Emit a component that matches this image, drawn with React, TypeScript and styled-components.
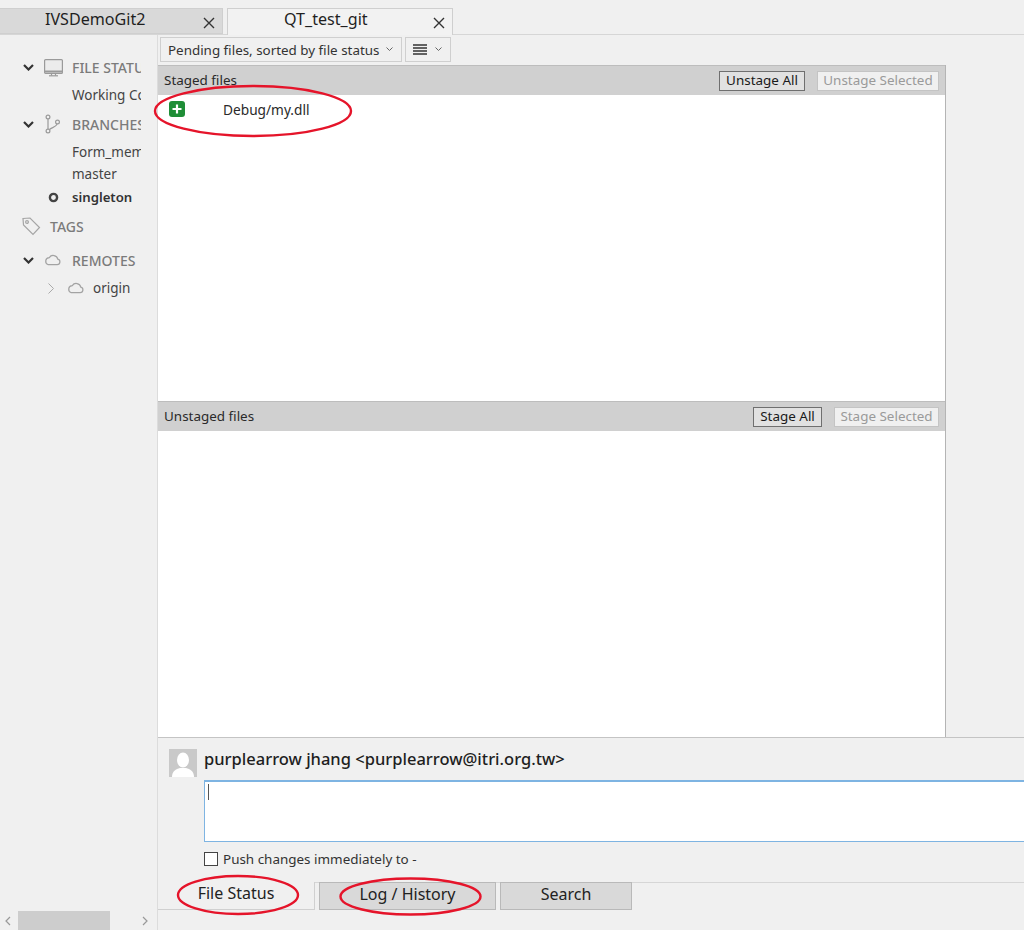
import React from "react";
import styled, { createGlobalStyle } from "styled-components";

const Global = createGlobalStyle`
  html, body { margin: 0; padding: 0; background: #f0f0f0; }
  * { box-sizing: border-box; }
  body { font-family: "Noto Sans", "Open Sans", "Liberation Sans", sans-serif; color: #222; }
`;

const Page = styled.div`
  position: relative; width: 1024px; height: 930px; overflow: hidden;
  background: #f0f0f0; display: flex; flex-direction: column;
`;
const TabBar = styled.div`
  height: 35px; flex: none; padding: 8px 0 0 0; display: flex; gap: 4px;
  border-bottom: 1px solid #d6d6d6;
`;
const RepoTab = styled.div<{ $active?: boolean; $w: number }>`
  position: relative; width: ${p => p.$w}px; height: ${p => (p.$active ? 27 : 26)}px;
  background: ${p => (p.$active ? "#f2f2f2" : "#d9d9d9")};
  border: 1px solid #cfcfcf; ${p => (p.$active ? "border-bottom: none;" : "border-left: none;")}
  font-size: 16.1px; line-height: 19px; color: #1f1f1f;
`;
const TabTitle = styled.span<{ $left: number }>`
  position: absolute; left: ${p => p.$left}px; top: 1px; white-space: nowrap;
`;
const CloseBtn = styled.svg`
  position: absolute; right: 7px; top: 8px; width: 12px; height: 12px;
`;
const Body = styled.div`
  flex: 1; display: flex; min-height: 0;
`;
const Sidebar = styled.aside`
  width: 158px; flex: none; display: flex; flex-direction: column;
  border-right: 1px solid #dcdcdc; position: relative;
`;
const Tree = styled.div`
  flex: 1; width: 141px; overflow: hidden; padding-top: 18px;
`;
const Row = styled.div<{ $h: number; $pl: number; $head?: boolean }>`
  height: ${p => p.$h}px; padding-left: ${p => p.$pl}px; display: flex; align-items: center;
  white-space: nowrap; color: ${p => (p.$head ? "#7b7b7b" : "#444")};
  font-weight: ${p => (p.$head ? 500 : 400)}; font-size: ${p => (p.$head ? 14 : 13.5)}px;
`;
const Bold = styled.span`
  font-weight: 600; color: #333; font-size: 13.2px;
`;
const IconSlot = styled.span<{ $w: number }>`
  width: ${p => p.$w}px; flex: none; display: flex; align-items: center;
`;
const ScrollTrack = styled.div`
  height: 26px; display: flex; align-items: center; position: relative; flex: none;
`;
const ScrollThumb = styled.div`
  position: absolute; left: 18px; top: 7px; width: 92px; height: 19px; background: #cdcdcd;
`;
const ScrollArrow = styled.svg<{ $left: number }>`
  position: absolute; left: ${p => p.$left}px; top: 12px; width: 8px; height: 10px;
`;
const Main = styled.main`
  flex: 1; min-width: 0; display: flex; flex-direction: column;
`;
const Toolbar = styled.div`
  height: 30px; flex: none; display: flex; gap: 3px; padding: 2px 0 0 2px;
`;
const Dropdown = styled.div<{ $w: number }>`
  width: ${p => p.$w}px; height: 25px; background: #f0f0f0; border: 1px solid #cfcfcf;
  display: flex; align-items: center; padding: 0 8px 0 7px; justify-content: space-between;
  font-size: 13.4px; color: #333; white-space: nowrap;
`;
const FilesArea = styled.div`
  flex: 1; min-height: 0; display: flex; border-bottom: 1px solid #c4c4c4;
`;
const FilesCol = styled.div`
  width: 788px; flex: none; display: flex; flex-direction: column;
  border-right: 1px solid #b4b4b4;
`;
const Pane = styled.section`
  flex: 1 0 0; min-height: 0; display: flex; flex-direction: column;
`;
const PaneHeader = styled.div`
  height: 30px; flex: none; background: #d0d0d0; display: flex; align-items: center;
  padding: 0 6px; gap: 12px; font-size: 13.45px; color: #2a2a2a;
  border-top: 1px solid #bdbdbd;
`;
const PaneTitle = styled.span`
  flex: 1; position: relative; top: -1px;
`;
const HdrBtn = styled.div<{ $disabled?: boolean; $w: number }>`
  width: ${p => p.$w}px; height: 20px; padding-bottom: 1px;
  display: flex; align-items: center; justify-content: center;
  background: ${p => (p.$disabled ? "#f0f0f0" : "#e1e1e1")};
  border: 1px solid ${p => (p.$disabled ? "#c4c4c4" : "#6f6f6f")};
  color: ${p => (p.$disabled ? "#9a9a9a" : "#1a1a1a")}; white-space: nowrap;
`;
const PaneList = styled.div`
  flex: 1; background: #fff;
`;
const FileRow = styled.div`
  height: 28px; display: flex; align-items: center; padding-left: 11px;
  font-size: 13.7px; color: #2a2a2a;
`;
const PlusBadge = styled.span`
  width: 16px; height: 16px; background: #1f8e37; border-radius: 3px; flex: none;
  display: flex; align-items: center; justify-content: center; margin-right: 38px;
`;
const RightGap = styled.div`
  flex: 1; background: #f0f0f0;
`;
const Commit = styled.div`
  height: 144px; flex: none; padding: 11px 0 0 11px; display: grid;
  grid-template-columns: 35px 1fr; grid-template-rows: 31px 62px 1fr; align-content: start;
`;
const Avatar = styled.svg`
  width: 28px; height: 28px; display: block;
`;
const Author = styled.div`
  font-size: 16.5px; font-weight: 500; color: #1e1e1e; white-space: nowrap; line-height: 20px;
`;
const MessageBox = styled.div`
  grid-column: 2; width: 830px; height: 62px; background: #fff;
  border: 1px solid #7eb4e2; border-top-width: 2px; padding: 2px 3px;
`;
const Caret = styled.span`
  display: block; width: 1px; height: 16px; background: #555;
`;
const PushRow = styled.label`
  grid-column: 2; display: flex; align-items: center; gap: 5px; font-size: 13.45px; color: #333;
  margin-top: 10px; height: 14px;
`;
const Check = styled.span`
  width: 14px; height: 14px; background: #fff; border: 1px solid #444; flex: none;
`;
const BottomTabs = styled.div`
  height: 28px; flex: none; display: flex; align-items: flex-start;
  font-size: 16px;
`;
const ViewTab = styled.div<{ $active?: boolean; $w: number }>`
  width: ${p => p.$w}px; height: 28px; padding-bottom: 5px; flex: none;
  display: flex; align-items: center; justify-content: center; color: #222;
  background: ${p => (p.$active ? "#f0f0f0" : "#d9d9d9")};
  border: 1px solid #b9b9b9;
  ${p => (p.$active ? "border-width: 0 1px 1px 0; border-color: #d0d0d0;" : "")}
`;
const TabGap = styled.div<{ $w?: number }>`
  ${p => (p.$w ? `width: ${p.$w}px; flex: none;` : "flex: 1;")}
  height: 1px; background: #d6d6d6;
`;
const ScrollGapFill = styled.div`
  height: 20px; flex: none;
`;
const Annotation = styled.svg`
  position: absolute; left: 0; top: 0; width: 1024px; height: 930px; pointer-events: none;
`;

const Chev = () => (
  <svg width="11" height="7" viewBox="0 0 11 7" fill="none" stroke="#333" strokeWidth="2.2"><path d="M1 1l4.5 4.5L10 1" /></svg>
);
const Cloud = () => (
  <svg width="17" height="12" viewBox="0 0 18 12" fill="none" stroke="#a3a3a3" strokeWidth="1.3">
    <path d="M4.5 11H14a3 3 0 0 0 .6-5.9A5 5 0 0 0 5.6 3.4 3.9 3.9 0 0 0 4.5 11z" />
  </svg>
);
const X = () => (
  <CloseBtn viewBox="0 0 12 12" stroke="#333" strokeWidth="1.4"><path d="M1 1l10 10M11 1L1 11" /></CloseBtn>
);
const Caretdown = () => (
  <svg width="7" height="5" viewBox="0 0 7 5" fill="none" stroke="#666" strokeWidth="1"><path d="M.5.5l3 3 3-3" /></svg>
);

export default function App() {
  return (
    <Page>
      <Global />
      <TabBar>
        <RepoTab $w={223}><TabTitle $left={45}>IVSDemoGit2</TabTitle><X /></RepoTab>
        <RepoTab $w={226} $active><TabTitle $left={56}>QT_test_git</TabTitle><X /></RepoTab>
      </TabBar>
      <Body>
        <Sidebar>
          <Tree>
            <Row $h={29} $pl={23} $head>
              <IconSlot $w={21}><Chev /></IconSlot>
              <IconSlot $w={28}>
                <svg width="19" height="18" viewBox="0 0 19 18" fill="none" stroke="#9a9a9a">
                  <rect x="0.6" y="0.6" width="17.8" height="13.8" rx="1" fill="#ececec" strokeWidth="1.2" />
                  <path d="M1 12.5h17" strokeWidth="2" />
                  <path d="M5 16.8h9" strokeWidth="1.2" />
                  <path d="M7.5 15v1.5M11.5 15v1.5" strokeWidth="1.2" />
                </svg>
              </IconSlot>
              FILE STATUS
            </Row>
            <Row $h={26} $pl={72}>Working Copy</Row>
            <Row $h={32} $pl={23} $head>
              <IconSlot $w={22}><Chev /></IconSlot>
              <IconSlot $w={27}>
                <svg width="15" height="20" viewBox="0 0 15 20" fill="none" stroke="#9a9a9a" strokeWidth="1.2">
                  <circle cx="3" cy="3" r="1.9" /><circle cx="3" cy="17" r="1.9" /><circle cx="12.5" cy="8" r="1.9" />
                  <path d="M3 5v10M12 10c-.5 3-5.5 3.5-7.5 5.5" />
                </svg>
              </IconSlot>
              BRANCHES
            </Row>
            <Row $h={23} $pl={72}>Form_member</Row>
            <Row $h={22} $pl={72}>master</Row>
            <Row $h={24} $pl={48}>
              <IconSlot $w={24}>
                <svg width="11" height="11" viewBox="0 0 11 11" fill="none" stroke="#444" strokeWidth="2.4"><circle cx="5.5" cy="5.5" r="3.6" /></svg>
              </IconSlot>
              <Bold>singleton</Bold>
            </Row>
            <Row $h={34} $pl={22} $head>
              <IconSlot $w={28}>
                <svg width="19" height="19" viewBox="0 0 19 19" fill="none" stroke="#a5a5a5" strokeWidth="1.2">
                  <path d="M1 1.5l7-.5 9.5 9.5-6.5 7L1.5 8z" /><circle cx="5" cy="5" r="1.4" />
                </svg>
              </IconSlot>
              TAGS
            </Row>
            <Row $h={34} $pl={23} $head>
              <IconSlot $w={21}><Chev /></IconSlot>
              <IconSlot $w={28}><Cloud /></IconSlot>
              REMOTES
            </Row>
            <Row $h={22} $pl={48}>
              <IconSlot $w={19}>
                <svg width="6" height="11" viewBox="0 0 6 11" fill="none" stroke="#aaa" strokeWidth="1"><path d="M.5.5l5 5-5 5" /></svg>
              </IconSlot>
              <IconSlot $w={26}><Cloud /></IconSlot>
              origin
            </Row>
          </Tree>
          <ScrollTrack>
            <ScrollArrow $left={4} viewBox="0 0 8 10" fill="none" stroke="#999" strokeWidth="1.2"><path d="M6 1L2 5l4 4" /></ScrollArrow>
            <ScrollThumb />
            <ScrollArrow $left={141} viewBox="0 0 8 10" fill="none" stroke="#999" strokeWidth="1.2"><path d="M2 1l4 4-4 4" /></ScrollArrow>
          </ScrollTrack>
        </Sidebar>
        <Main>
          <Toolbar>
            <Dropdown $w={242}>
              Pending files, sorted by file status
              <Caretdown />
            </Dropdown>
            <Dropdown $w={46}>
              <svg width="14" height="12" viewBox="0 0 14 12" fill="none" stroke="#333" strokeWidth="1.3"><path d="M0 1h14M0 4h14M0 7h14M0 10h14" /></svg>
              <Caretdown />
            </Dropdown>
          </Toolbar>
          <FilesArea>
            <FilesCol>
              <Pane>
                <PaneHeader>
                  <PaneTitle>Staged files</PaneTitle>
                  <HdrBtn $w={86}>Unstage All</HdrBtn>
                  <HdrBtn $w={122} $disabled>Unstage Selected</HdrBtn>
                </PaneHeader>
                <PaneList>
                  <FileRow>
                    <PlusBadge>
                      <svg width="10" height="10" viewBox="0 0 10 10" stroke="#fff" strokeWidth="2.2"><path d="M5 0.5v9M0.5 5h9" /></svg>
                    </PlusBadge>
                    Debug/my.dll
                  </FileRow>
                </PaneList>
              </Pane>
              <Pane>
                <PaneHeader>
                  <PaneTitle>Unstaged files</PaneTitle>
                  <HdrBtn $w={69}>Stage All</HdrBtn>
                  <HdrBtn $w={105} $disabled>Stage Selected</HdrBtn>
                </PaneHeader>
                <PaneList />
              </Pane>
            </FilesCol>
            <RightGap />
          </FilesArea>
          <Commit>
            <Avatar viewBox="0 0 28 28">
              <rect width="28" height="28" fill="#c9c9c9" />
              <ellipse cx="14" cy="11" rx="6" ry="7.5" fill="#fff" />
              <path d="M3 28c0-6 4-8 8-9h6c4 1 8 3 8 9z" fill="#fff" />
            </Avatar>
            <Author>purplearrow jhang &lt;purplearrow@itri.org.tw&gt;</Author>
            <MessageBox><Caret /></MessageBox>
            <PushRow><Check />Push changes immediately to -</PushRow>
          </Commit>
          <BottomTabs>
            <ViewTab $w={157} $active>File Status</ViewTab>
            <TabGap $w={4} />
            <ViewTab $w={177}>Log / History</ViewTab>
            <TabGap $w={4} />
            <ViewTab $w={132}>Search</ViewTab>
            <TabGap />
          </BottomTabs>
          <ScrollGapFill />
        </Main>
      </Body>
      <Annotation viewBox="0 0 1024 930" fill="none" stroke="#e5142a" strokeWidth="2.4">
        <ellipse cx="253" cy="111" rx="98" ry="25" />
        <ellipse cx="238" cy="895" rx="60" ry="19" />
        <ellipse cx="410.5" cy="896.5" rx="70" ry="18" />
      </Annotation>
    </Page>
  );
}
